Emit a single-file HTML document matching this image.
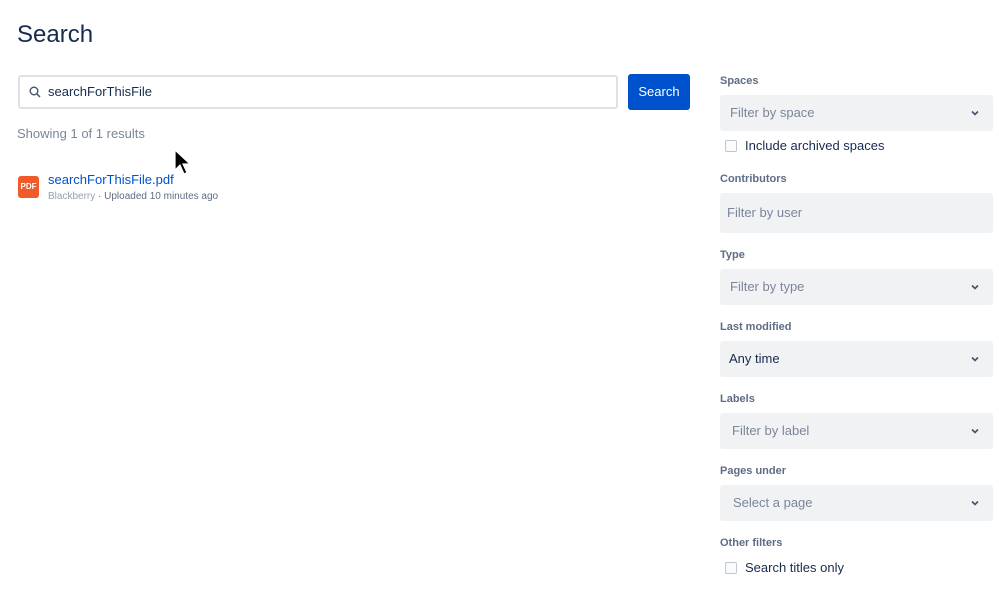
<!DOCTYPE html><html><head><style>
body{margin:0;width:999px;height:603px;background:#fff;font-family:"Liberation Sans",sans-serif;position:relative;overflow:hidden;color:#172b4d}
.a{position:absolute}
h1{position:absolute;left:17px;top:21px;margin:0;font-size:24px;font-weight:400;color:#172b4d}
.lbl{position:absolute;left:720px;font-size:11px;font-weight:700;color:#5e6c84}
.sel{position:absolute;left:720px;width:273px;height:36px;background:#f1f2f4;border-radius:3px;font-size:13px;color:#7a869a;box-sizing:border-box;padding-left:10px;line-height:36px}
.sel svg{position:absolute;right:14px;top:15px}
.cb{position:absolute;left:725px;width:10px;height:10px;border:1px solid #c1c7d0;border-radius:2px;background:#fafbfc}
.cbt{position:absolute;left:745px;font-size:13px;color:#172b4d}
</style></head><body>
<h1>Search</h1>
<div class="a" style="left:18px;top:75px;width:600px;height:34px;border:2px solid #dfe1e6;box-sizing:border-box;border-radius:3px"></div>
<svg class="a" style="left:29px;top:86px" width="12" height="12" viewBox="0 0 12 12"><circle cx="5" cy="5" r="3.8" fill="none" stroke="#42526e" stroke-width="1.4"/><path d="M8 8l3 3" stroke="#42526e" stroke-width="1.4"/></svg>
<div class="a" style="left:48px;top:84px;font-size:13px;color:#172b4d">searchForThisFile</div>
<div class="a" style="left:628px;top:74px;width:62px;height:36px;background:#0052cc;border-radius:3px;color:#fff;font-size:13px;text-align:center;line-height:36px">Search</div>
<div class="a" style="left:17px;top:126px;font-size:13px;color:#7a869a">Showing 1 of 1 results</div>
<div class="a" style="left:18px;top:176px;width:21px;height:22px;background:#f15a2b;border-radius:3px;color:#fff;font-size:8px;font-weight:700;text-align:center;line-height:22px">PDF</div>
<div class="a" style="left:48px;top:172px;font-size:13px;color:#0052cc">searchForThisFile.pdf</div>
<div class="a" style="left:48px;top:191px;font-size:10px;color:#5e6c84"><span style="color:#97a0af">Blackberry</span> · Uploaded 10 minutes ago</div>
<svg class="a" style="left:173px;top:149px" width="20" height="30" viewBox="0 0 20 30"><path d="M2 1v20l5-5 4 9 3-1.5-4-8.5h7z" fill="#000" stroke="#fff" stroke-width="1.2"/></svg>
<div class="lbl" style="top:75px">Spaces</div>
<div class="sel" style="top:95px">Filter by space<svg width="8" height="6" viewBox="0 0 8 6"><path d="M1 1.5l3 3 3-3" fill="none" stroke="#42526e" stroke-width="1.6"/></svg></div>
<div class="cb" style="top:140px"></div><div class="cbt" style="top:138px">Include archived spaces</div>
<div class="lbl" style="top:173px">Contributors</div>
<div class="sel" style="top:193px;height:40px;line-height:40px;padding-left:7px">Filter by user</div>
<div class="lbl" style="top:249px">Type</div>
<div class="sel" style="top:269px">Filter by type<svg width="8" height="6" viewBox="0 0 8 6"><path d="M1 1.5l3 3 3-3" fill="none" stroke="#42526e" stroke-width="1.6"/></svg></div>
<div class="lbl" style="top:321px">Last modified</div>
<div class="sel" style="top:341px;color:#172b4d;padding-left:9px">Any time<svg width="8" height="6" viewBox="0 0 8 6"><path d="M1 1.5l3 3 3-3" fill="none" stroke="#42526e" stroke-width="1.6"/></svg></div>
<div class="lbl" style="top:393px">Labels</div>
<div class="sel" style="top:413px;padding-left:12px">Filter by label<svg width="8" height="6" viewBox="0 0 8 6"><path d="M1 1.5l3 3 3-3" fill="none" stroke="#42526e" stroke-width="1.6"/></svg></div>
<div class="lbl" style="top:465px">Pages under</div>
<div class="sel" style="top:485px;padding-left:13px">Select a page<svg width="8" height="6" viewBox="0 0 8 6"><path d="M1 1.5l3 3 3-3" fill="none" stroke="#42526e" stroke-width="1.6"/></svg></div>
<div class="lbl" style="top:537px">Other filters</div>
<div class="cb" style="top:562px"></div><div class="cbt" style="top:560px">Search titles only</div>
</body></html>
